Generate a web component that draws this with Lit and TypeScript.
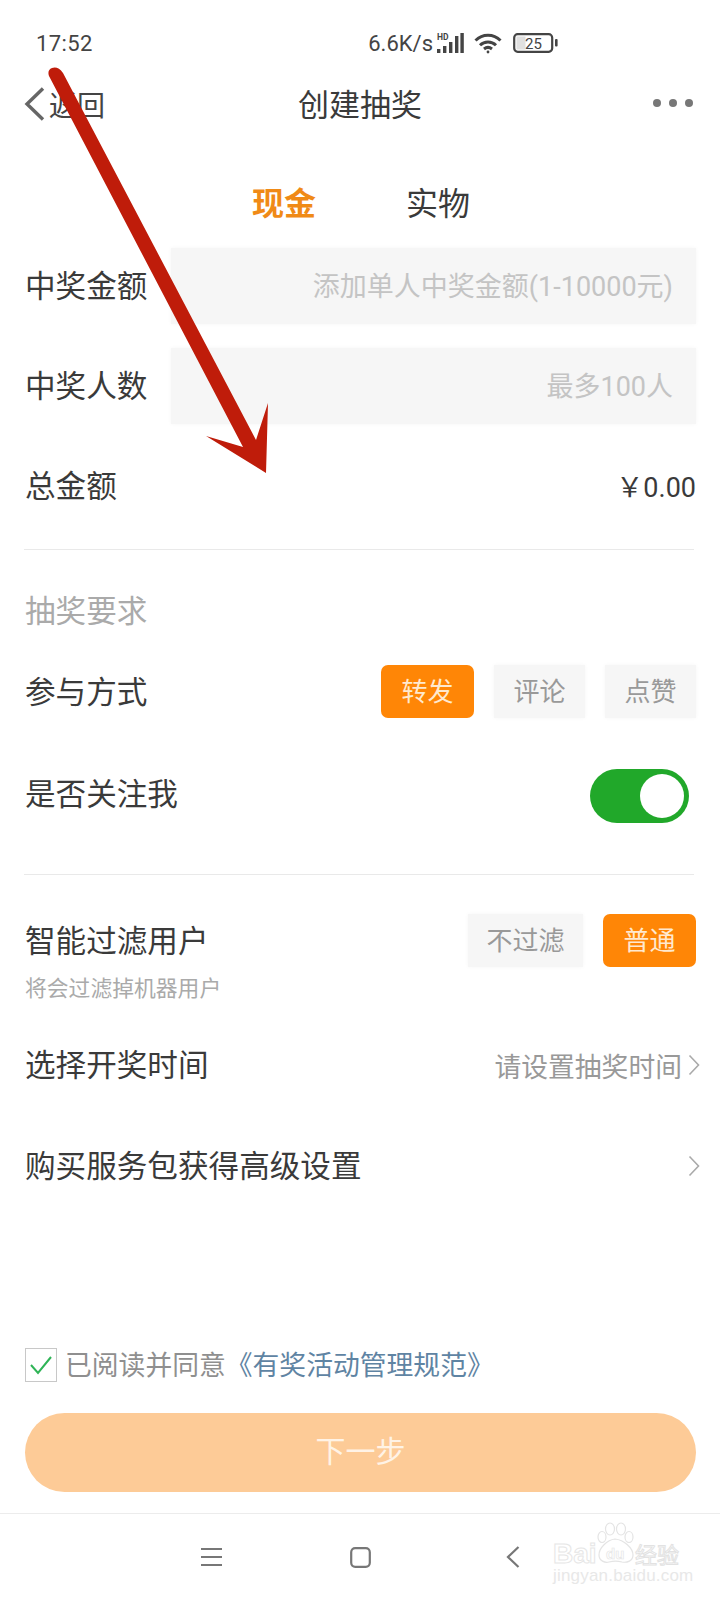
import { LitElement, html, css } from "lit";
import { customElement } from "lit/decorators.js";

const chevronRight = html`<svg class="chev" viewBox="0 0 12 22" width="12" height="22"><path d="M1.5 1.5 L10.5 11 L1.5 20.5" fill="none" stroke="#aaa" stroke-width="1.6"/></svg>`;

@customElement("app-root")
export class AppRoot extends LitElement {
  static styles = css`
    :host { display: block; width: 720px; height: 1600px; background: #fff; position: relative; overflow: hidden;
      font-family: Roboto, "Noto Sans CJK SC", sans-serif; color: #333; }
    .page { height: 1600px; display: flex; flex-direction: column; }
    .status { height: 72px; flex: none; display: flex; align-items: center; padding: 14px 162px 0 36px; box-sizing: border-box; color: #444; }
    .time { font-size: 22px; letter-spacing: 0.4px; }
    .sright { margin-left: auto; display: flex; align-items: center; }
    .speed { font-size: 22px; }
    .signal { margin-left: 3px; }
    .wifi { margin-left: 10px; }
    .batt { margin-left: 11px; }
    .nav { height: 64px; flex: none; display: flex; align-items: center; padding: 0 27px 0 24px; position: relative; }
    .back { display: flex; align-items: center; gap: 4px; font-size: 28px; color: #444; }
    .title { position: absolute; left: 298px; font-size: 31px; color: #3a3a3a; padding-bottom: 4px; }
    .dots { margin-left: auto; display: flex; gap: 8px; padding-bottom: 2px; }
    .dots i { width: 8px; height: 8px; border-radius: 50%; background: #777; display: block; }
    .tabs { height: 68px; margin-top: 34px; flex: none; display: flex; align-items: center; padding: 0 0 6px 252px; box-sizing: border-box; gap: 90px; font-size: 32px; color: #3a3a3a; }
    .tabs .on { color: #f08a16; font-weight: 700; }
    .form { padding: 10px 24px 0 25px; display: flex; flex-direction: column; }
    .row { display: flex; align-items: center; justify-content: space-between; font-size: 30.6px; }
    .t { padding-bottom: 4px; color: #3a3a3a; }
    .inputrow { height: 76px; margin-bottom: 24px; }
    .input { width: 525px; height: 76px; box-sizing: border-box; background: #f6f6f6; box-shadow: 0 0 4px #f6f6f6; display: flex; align-items: center; justify-content: flex-end; padding: 0 23px 4px 0; font-size: 27px; color: #c4c4c4; }
    .total { height: 76px; }
    .amount { font-size: 27px; color: #3a3a3a; padding-bottom: 2px; }
    .line { height: 1px; background: #e9e9e9; margin: 25px 2px 0 -1px; flex: none; }
    .sect { font-size: 30.6px; color: #aaa; margin-top: 40px; height: 44px; line-height: 44px; }
    .join { height: 53px; margin-top: 31px; }
    .opts { display: flex; gap: 20px; }
    .opt { width: 91px; height: 53px; box-sizing: border-box; padding-bottom: 4px; display: flex; align-items: center; justify-content: center; font-size: 26px; color: #999; background: #f6f6f6; box-shadow: 0 0 4px #f6f6f6; }
    .opt.on { background: #ff8606; color: #ffe9cf; border-radius: 7px; box-shadow: none; width: 93px; }
    .opt.wide { width: 115px; }
    .follow { height: 56px; margin-top: 50px; }
    .follow .t { padding-bottom: 8px; }
    .toggle { width: 99px; height: 54px; border-radius: 27px; background: #21a82a; margin-right: 7px; display: flex; align-items: center; justify-content: flex-end; padding-right: 5px; box-sizing: border-box; }
    .toggle i { width: 44px; height: 44px; border-radius: 50%; background: #fff; display: block; }
    .line2 { margin-top: 50px; }
    .filter { margin-top: 39px; height: 53px; }
    .sub { font-size: 21.8px; color: #aaa; margin-top: 6px; height: 32px; line-height: 32px; }
    .link { height: 60px; }
    .time-row { margin-top: 30px; }
    .buy-row { margin-top: 41px; }
    .hint { font-size: 26.8px; color: #999; display: flex; align-items: center; gap: 6px; margin-right: -4px; }
    .spacer { flex: 1; }
    .agree { display: flex; align-items: center; padding-left: 25px; height: 34px; font-size: 26.8px; color: #8f8f8f; gap: 8px; margin-bottom: 31px; }
    .agree .txt { padding-bottom: 4px; }
    .check { width: 32px; height: 34px; box-sizing: border-box; border: 1px solid #c8c8c8; display: flex; align-items: center; justify-content: center; }
    .agree b { font-weight: 400; color: #5f84a3; }
    .next { margin: 0 24px 0 25px; height: 79px; border-radius: 40px; background: #fdcb97; color: #fff3e6; font-size: 30px; display: flex; align-items: center; justify-content: center; padding-bottom: 8px; box-sizing: border-box; }
    .bar { margin-top: 21px; height: 87px; flex: none; box-sizing: border-box; border-top: 1px solid #ececec; display: flex; align-items: center; position: relative; padding: 0 0 0 201px; gap: 128px; }
    .bar svg:last-of-type { margin-left: 7px; }
    .arrow { position: absolute; left: 0; top: 0; pointer-events: none; }
    .mark { position: absolute; left: 552px; top: 1522px; width: 130px; height: 64px; font-family: "Liberation Sans", sans-serif; line-height: 1; }
    .mark .brand { position: absolute; top: 18px; left: 1px; font-size: 28px; font-weight: 700; color: #fff; -webkit-text-stroke: 1px #e6e6e6; white-space: nowrap; }
    .mark .du { position: absolute; top: 24px; left: 54px; font-size: 15px; font-weight: 700; color: #fff; -webkit-text-stroke: 0.7px #e6e6e6; }
    .mark .jy { position: absolute; top: 20px; left: 83px; font-family: "Noto Sans CJK SC", sans-serif; font-size: 22px; color: #fff; -webkit-text-stroke: 1px #e2e2e2; white-space: nowrap; }
    .mark .url { position: absolute; top: 45px; left: 1px; font-size: 17px; color: #e8e8e8; white-space: nowrap; letter-spacing: 0.2px; }
    .mark svg { position: absolute; left: 45px; top: 0; }
  `;

  render() {
    return html`
      <div class="page">
        <div class="status">
          <span class="time">17:52</span>
          <div class="sright">
            <span class="speed">6.6K/s</span>
            <svg class="signal" width="28" height="22" viewBox="0 0 28 22">
              <text x="1" y="7.5" font-size="8.5" font-weight="700" font-family="Roboto, sans-serif" fill="#444">HD</text>
              <rect x="1" y="17" width="3.4" height="4" fill="#444"/>
              <rect x="7" y="14" width="3.4" height="7" fill="#444"/>
              <rect x="13" y="10" width="3.4" height="11" fill="#444"/>
              <rect x="19" y="4" width="3.4" height="17" fill="#444"/>
              <rect x="24.4" y="1" width="3.4" height="20" fill="#444"/>
            </svg>
            <svg class="wifi" width="28" height="21" viewBox="0 0 28 21" fill="none" stroke="#444" stroke-width="3">
              <path d="M1.5 7.5 C8.5 0.5 19.5 0.5 26.5 7.5"/>
              <path d="M6 12.2 C10.5 7.8 17.5 7.8 22 12.2"/>
              <path d="M10 16 C12.5 14 15.5 14 18 16"/>
              <circle cx="14" cy="19" r="1.4" fill="#444" stroke="none"/>
            </svg>
            <svg class="batt" width="45" height="20" viewBox="0 0 45 20">
              <rect x="1.2" y="1.2" width="38" height="17.6" rx="3.5" fill="#fff" stroke="#444" stroke-width="2.2"/>
              <rect x="3.5" y="3.5" width="9" height="13" fill="#e0e0e0"/>
              <text x="20.5" y="15.5" text-anchor="middle" font-size="15" font-family="Roboto, sans-serif" fill="#444">25</text>
              <rect x="42" y="6" width="2.6" height="7.5" rx="1" fill="#444"/>
            </svg>
          </div>
        </div>
        <div class="nav">
          <div class="back">
            <svg width="21" height="34" viewBox="0 0 21 34"><path d="M19 1.5 L3 17 L19 32.5" fill="none" stroke="#666" stroke-width="3.4"/></svg>
            <span>返回</span>
          </div>
          <div class="title">创建抽奖</div>
          <div class="dots"><i></i><i></i><i></i></div>
        </div>
        <div class="tabs"><span class="on">现金</span><span>实物</span></div>
        <div class="form">
          <div class="row inputrow"><span class="t">中奖金额</span><div class="input">添加单人中奖金额(1-10000元)</div></div>
          <div class="row inputrow"><span class="t">中奖人数</span><div class="input">最多100人</div></div>
          <div class="row total"><span class="t">总金额</span><span class="amount">￥0.00</span></div>
          <div class="line"></div>
          <div class="sect">抽奖要求</div>
          <div class="row join"><span class="t">参与方式</span>
            <div class="opts"><span class="opt on">转发</span><span class="opt">评论</span><span class="opt">点赞</span></div>
          </div>
          <div class="row follow"><span class="t">是否关注我</span><div class="toggle"><i></i></div></div>
          <div class="line line2"></div>
          <div class="row filter"><span class="t">智能过滤用户</span>
            <div class="opts"><span class="opt wide">不过滤</span><span class="opt on">普通</span></div>
          </div>
          <div class="sub">将会过滤掉机器用户</div>
          <div class="row link time-row"><span class="t">选择开奖时间</span><span class="hint">请设置抽奖时间${chevronRight}</span></div>
          <div class="row link buy-row"><span class="t">购买服务包获得高级设置</span><span class="hint">${chevronRight}</span></div>
        </div>
        <div class="spacer"></div>
        <div class="agree">
          <span class="check"><svg width="24" height="20" viewBox="0 0 24 20"><path d="M2 10 L9 18 L22 2" fill="none" stroke="#2fb457" stroke-width="2"/></svg></span>
          <span class="txt">已阅读并同意<b>《有奖活动管理规范》</b></span>
        </div>
        <div class="next">下一步</div>
        <div class="bar">
          <svg width="21" height="20" viewBox="0 0 21 20" stroke="#777" stroke-width="2.2"><path d="M0 2H21M0 10H21M0 18H21"/></svg>
          <svg width="21" height="21" viewBox="0 0 21 21"><rect x="1.2" y="1.2" width="18.6" height="18.6" rx="4" fill="none" stroke="#777" stroke-width="2.2"/></svg>
          <svg width="14" height="22" viewBox="0 0 14 22"><path d="M12.5 1 L2 11 L12.5 21" fill="none" stroke="#777" stroke-width="2.2"/></svg>
        </div>
      </div>
      <svg class="arrow" width="720" height="1600" viewBox="0 0 720 1600">
        <path d="M49 76 Q47 70 52 68 Q58 66 63 73 L256 440 L268 403 L266 473 L206 436 L243 447 Z" fill="#bf1c0a"/>
      </svg>
      <div class="mark">
        <svg width="38" height="42" viewBox="0 0 38 42" fill="#fff" stroke="#e4e4e4" stroke-width="1.2">
          <ellipse cx="5" cy="15" rx="4" ry="5.5"/><ellipse cx="13" cy="7" rx="4.5" ry="6"/><ellipse cx="24" cy="7" rx="4.5" ry="6"/><ellipse cx="32" cy="15" rx="4" ry="5.5"/>
          <path d="M18 17 C10 18 2 26 2 33 C2 39 8 41 12 40 C16 39 21 39 25 40 C30 41 36 39 36 33 C36 26 27 18 18 17 Z"/>
        </svg>
        <span class="brand">Bai</span><span class="du">du</span><span class="jy">经验</span>
        <span class="url">jingyan.baidu.com</span>
      </div>
    `;
  }
}
